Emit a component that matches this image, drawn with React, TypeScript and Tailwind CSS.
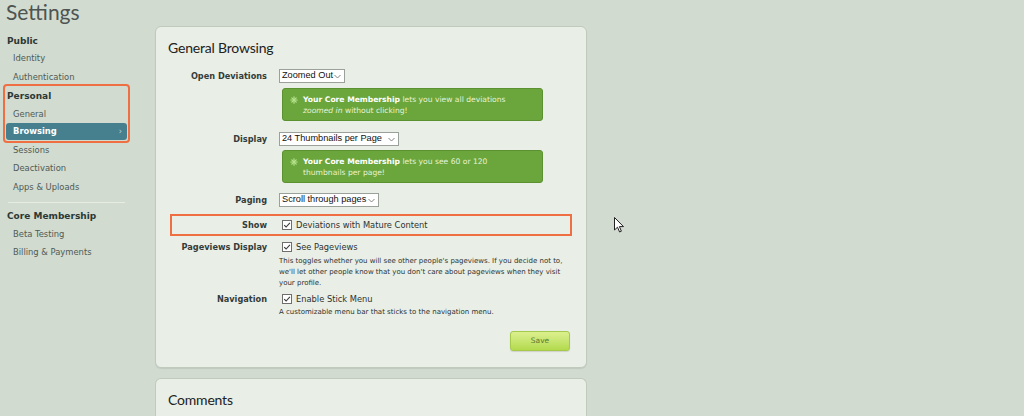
import React from 'react';

const verdana = { fontFamily: '"DejaVu Sans", Verdana, sans-serif' };
const lato = { fontFamily: 'Lato, "Open Sans", sans-serif' };

const SIDE_ITEM = 'pl-[7px] flex items-center text-[8.4px] text-[#4f5a56]';
const SIDE_HEAD = 'pl-[1px] flex items-center text-[9px] font-bold text-[#2c3835]';

function Sidebar() {
  return (
    <div className="w-[155px] shrink-0 pt-[8px] px-[6px]" style={verdana}>
      <div className="w-[121px] flex flex-col">
        <div className={`${SIDE_HEAD} h-[16px]`}>Public</div>
        <div className={`${SIDE_ITEM} h-[18px] -mt-[1px]`}>Identity</div>
        <div className={`${SIDE_ITEM} h-[20px]`}>Authentication</div>

        {/* highlighted group */}
        <div className="outline-2 outline-offset-1 outline-[#ef6f43] rounded-[1px]">
          <div className={`${SIDE_HEAD} h-[19px] pt-[1px]`}>Personal</div>
          <div className={`${SIDE_ITEM} h-[16px]`}>General</div>
          <div className="mt-[1px] h-[17px] rounded-[3px] bg-[#46808e] flex items-center justify-between pl-[7px] pr-[5px] text-[8.4px] font-bold text-white">
            <span>Browsing</span>
            <span className="text-[8px] font-normal text-[#b9d3da]">›</span>
          </div>
        </div>

        <div className={`${SIDE_ITEM} mt-[1px] h-[18px]`}>Sessions</div>
        <div className={`${SIDE_ITEM} h-[19px]`}>Deactivation</div>
        <div className={`${SIDE_ITEM} h-[18px]`}>Apps &amp; Uploads</div>
        <div className="mt-[6px] mx-[2px] h-px bg-[#e6ece3]" />
        <div className={`${SIDE_HEAD} mt-[4px] h-[19px]`}>Core Membership</div>
        <div className={`${SIDE_ITEM} h-[16px]`}>Beta Testing</div>
        <div className={`${SIDE_ITEM} mt-[1px] h-[18px]`}>Billing &amp; Payments</div>
      </div>
    </div>
  );
}

function FakeSelect({ label, width }: { label: string; width: string }) {
  return (
    <div
      className={`${width} h-[14px] border border-[#9aa09a] bg-white flex items-center justify-between pl-[2px] pr-[3px] text-[9.2px] text-[#111] whitespace-nowrap`}
      style={{ fontFamily: '"Liberation Sans", Arial, sans-serif' }}
    >
      <span className="leading-none">{label}</span>
      <svg width="7" height="5" viewBox="0 0 7 5" className="shrink-0">
        <path d="M0.5 1 L3.5 4 L6.5 1" fill="none" stroke="#777" strokeWidth="0.9" />
      </svg>
    </div>
  );
}

function Spark() {
  return (
    <svg width="8" height="8" viewBox="0 0 8 8" className="shrink-0 mt-[2px]">
      <g stroke="#b6e38c" strokeWidth="1.2" strokeLinecap="round">
        <line x1="4" y1="0.8" x2="4" y2="7.2" />
        <line x1="0.8" y1="4" x2="7.2" y2="4" />
        <line x1="1.8" y1="1.8" x2="6.2" y2="6.2" />
        <line x1="6.2" y1="1.8" x2="1.8" y2="6.2" />
      </g>
    </svg>
  );
}

function Promo({ children }: { children: React.ReactNode }) {
  return (
    <div className="ml-[3px] w-[261px] h-[33px] rounded-[3px] border border-[#5b9130] bg-[#6ba63c] flex gap-[5px] pl-[7px] pr-2 pt-[5px] text-[7.6px] leading-[11px] text-[#e6f3d6]">
      <Spark />
      <div>{children}</div>
    </div>
  );
}

function Check() {
  return (
    <svg width="10" height="10" viewBox="0 0 10 10" className="shrink-0">
      <rect x="0.5" y="0.5" width="9" height="9" fill="#fff" stroke="#6e6e6e" />
      <path d="M2.2 5.1 L4.1 7 L7.9 2.8" fill="none" stroke="#3a3a3a" strokeWidth="1.1" />
    </svg>
  );
}

function Label({ children, w = 'w-[111px]' }: { children: React.ReactNode; w?: string }) {
  return <div className={`${w} shrink-0 text-right text-[8.2px] font-bold text-[#333c3a] leading-[14px]`}>{children}</div>;
}

function GeneralBrowsing() {
  return (
    <div className="h-[342px] rounded-[6px] border border-[#bfc9bc] bg-[#e9eee6] shadow-[0_1px_1px_rgba(0,0,0,0.08)] flex flex-col" style={verdana}>
      <div className="mt-[11px] pl-[12px] h-[18px] flex items-center text-[14px] text-[#222] tracking-[-0.2px]" style={lato}>
        General Browsing
      </div>

      {/* Open Deviations */}
      <div className="mt-[13px] flex gap-[12px]">
        <Label>Open Deviations</Label>
        <div className="flex flex-col gap-[5px]">
          <FakeSelect label="Zoomed Out" width="w-[66px]" />
          <Promo>
            <b className="text-white">Your Core Membership</b> lets you view all deviations
            <br />
            <i>zoomed in</i> without clicking!
          </Promo>
        </div>
      </div>

      {/* Display */}
      <div className="mt-[11px] flex gap-[12px]">
        <Label>Display</Label>
        <div className="flex flex-col gap-[4px]">
          <FakeSelect label="24 Thumbnails per Page" width="w-[120px]" />
          <Promo>
            <b className="text-white">Your Core Membership</b> lets you see 60 or 120
            <br />
            thumbnails per page!
          </Promo>
        </div>
      </div>

      {/* Paging */}
      <div className="mt-[10px] flex gap-[12px]">
        <Label>Paging</Label>
        <FakeSelect label="Scroll through pages" width="w-[100px]" />
      </div>

      {/* Show (highlighted) */}
      <div className="mt-[9px] mx-[16px] h-[18px] outline-2 outline-[#ef6f43] flex items-center gap-[12px]">
        <Label w="w-[95px]">Show</Label>
        <div className="flex items-center gap-[4px] pl-[3px] text-[8.3px] text-[#2d3331]">
          <Check />
          <span>Deviations with Mature Content</span>
        </div>
      </div>

      {/* Pageviews */}
      <div className="mt-[6px] flex gap-[12px]">
        <Label>Pageviews Display</Label>
        <div className="flex flex-col">
          <div className="h-[14px] flex items-center gap-[4px] pl-[3px] text-[8.3px] text-[#2d3331]">
            <Check />
            <span>See Pageviews</span>
          </div>
          <p className="mt-[2px] w-[290px] text-[7px] leading-[11px] text-[#2d3331]">
            This toggles whether you will see other people's pageviews. If you decide not to,
            <br />
            we'll let other people know that you don't care about pageviews when they visit
            <br />
            your profile.
          </p>
        </div>
      </div>

      {/* Navigation */}
      <div className="mt-[3px] flex gap-[12px]">
        <Label>Navigation</Label>
        <div className="flex flex-col">
          <div className="h-[14px] flex items-center gap-[4px] pl-[3px] text-[8.3px] text-[#2d3331]">
            <Check />
            <span>Enable Stick Menu</span>
          </div>
          <p className="mt-[1px] text-[7px] leading-[11px] text-[#2d3331]">
            A customizable menu bar that sticks to the navigation menu.
          </p>
        </div>
      </div>

      <div className="mt-[13px] pr-[16px] flex justify-end">
        <button className="w-[60px] h-[20px] rounded-[3px] border border-[#a5c94a] bg-gradient-to-b from-[#dcf08e] to-[#b3da4c] text-[7.5px] text-[#5f7a2e] shadow-[0_1px_1px_rgba(0,0,0,0.12)]">
          Save
        </button>
      </div>
    </div>
  );
}

function Comments() {
  return (
    <div className="mt-[10px] h-[60px] rounded-t-[6px] border border-b-0 border-[#bfc9bc] bg-[#e9eee6]">
      <div className="mt-[11px] pl-[12px] h-[18px] flex items-center text-[14px] text-[#222] tracking-[-0.2px]" style={lato}>
        Comments
      </div>
    </div>
  );
}

export default function App() {
  return (
    <div className="relative w-[1024px] h-[416px] overflow-hidden bg-[#d1dbcf]">
      <div className="h-[26px] pl-[6px] text-[21px] leading-[24px] text-[#4e5452]" style={lato}>
        Settings
      </div>
      <div className="flex">
        <Sidebar />
        <div className="w-[432px]">
          <GeneralBrowsing />
          <Comments />
        </div>
      </div>

      {/* mouse cursor */}
      <svg width="11" height="17" viewBox="0 0 11 17" className="absolute left-[614px] top-[217px]">
        <path d="M0.5 0.5 L0.5 13 L3.5 10.2 L5.6 15 L7.4 14.2 L5.4 9.6 L9.5 9.6 Z" fill="#fff" stroke="#222" strokeWidth="1" strokeLinejoin="round" />
      </svg>
    </div>
  );
}
